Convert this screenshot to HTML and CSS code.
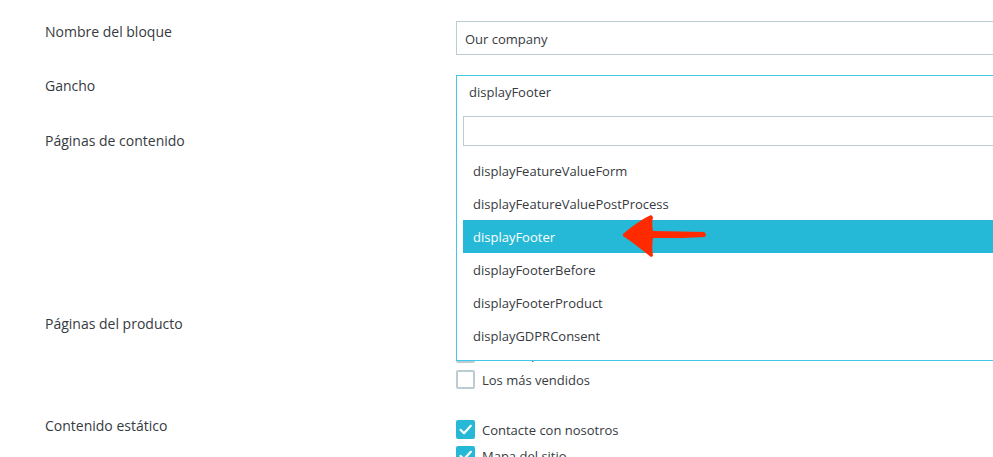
FILE: index.html
```html
<!DOCTYPE html>
<html lang="es">
<head>
<meta charset="utf-8">
<title>Bloque</title>
<link rel="stylesheet" href="styles.css">
</head>
<body>
<div class="form">
  <div class="row">
    <div class="label">Nombre del bloque</div>
    <div class="field">
      <div class="text-input">Our company</div>
    </div>
  </div>

  <div class="row">
    <div class="label">Gancho</div>
    <div class="field select-field">
      <div class="select-box">displayFooter</div>
      <div class="dropdown">
        <div class="search"></div>
        <ul class="options">
          <li class="option">displayFeatureValueForm</li>
          <li class="option">displayFeatureValuePostProcess</li>
          <li class="option active">displayFooter</li>
          <li class="option">displayFooterBefore</li>
          <li class="option">displayFooterProduct</li>
          <li class="option">displayGDPRConsent</li>
        </ul>
      </div>
    </div>
  </div>

  <div class="row">
    <div class="label">Páginas de contenido</div>
    <div class="field checklist checklist-cms">
      <div class="item"><span class="cb"></span><span class="txt">Envío</span></div>
      <div class="item"><span class="cb"></span><span class="txt">Aviso legal</span></div>
      <div class="item"><span class="cb"></span><span class="txt">Términos y condiciones de uso</span></div>
      <div class="item"><span class="cb"></span><span class="txt">Sobre nosotros</span></div>
      <div class="item"><span class="cb"></span><span class="txt">Pago seguro</span></div>
      <div class="item"><span class="cb"></span><span class="txt">Tiendas</span></div>
    </div>
  </div>

  <div class="row">
    <div class="label">Páginas del producto</div>
    <div class="field checklist">
      <div class="item"><span class="cb"></span><span class="txt">Precios rebajados</span></div>
      <div class="item"><span class="cb"></span><span class="txt">Nuevos productos</span></div>
      <div class="item"><span class="cb"></span><span class="txt">Los más vendidos</span></div>
    </div>
  </div>

  <div class="row">
    <div class="label">Contenido estático</div>
    <div class="field checklist">
      <div class="item"><span class="cb checked"><svg viewBox="0 0 19 19" width="19" height="19"><path d="M4.5 9.8 L8 13.2 L14.8 5.8" fill="none" stroke="#fff" stroke-width="2.2" stroke-linecap="round" stroke-linejoin="round"/></svg></span><span class="txt">Contacte con nosotros</span></div>
      <div class="item"><span class="cb checked"><svg viewBox="0 0 19 19" width="19" height="19"><path d="M4.5 9.8 L8 13.2 L14.8 5.8" fill="none" stroke="#fff" stroke-width="2.2" stroke-linecap="round" stroke-linejoin="round"/></svg></span><span class="txt">Mapa del sitio</span></div>
      <div class="item"><span class="cb"></span><span class="txt">Tiendas</span></div>
    </div>
  </div>
</div>

<svg class="arrow" viewBox="0 0 90 48" width="90" height="48">
  <path d="M3 22 C10 16 20 8 31 3 L33 5 C32 10 32 14 33 19 L60 19.5 L84 20 L86 22 L85 25 L62 26 L33 26 C32 32 32 38 33 44 L31 45 C22 38 12 30 3 24 Z" fill="#ff2a00"/>
</svg>
</body>
</html>
```

FILE: styles.css
```css
html, body {
  margin: 0;
  padding: 0;
  overflow: hidden;
  background: #ffffff;
}

body {
  font-family: "Open Sans", "Liberation Sans", sans-serif;
  font-size: 14px;
  color: #363a41;
  position: relative;
  width: 993px;
  height: 457px;
}

.form {
  padding-top: 21px;
}

.row {
  display: grid;
  grid-template-columns: 456px 600px;
  margin-bottom: 20px;
}

.label {
  padding-left: 45px;
  padding-top: 1px;
  line-height: 20px;
}

.field {
  position: relative;
  font-size: 13px;
}

.text-input {
  height: 32px;
  box-sizing: content-box;
  line-height: 32px;
  border: 1px solid #bbcdd2;
  padding-left: 8px;
  position: relative;
}

.text-input::first-line {
  line-height: 34px;
}

.select-box {
  border: 1px solid #40c9e6;
  border-bottom: none;
  padding-left: 12px;
  padding-top: 6px;
  box-sizing: border-box;
  height: 35px;
  line-height: 20px;
}

.dropdown {
  position: absolute;
  left: 0;
  right: 0;
  top: 35px;
  background: #ffffff;
  border: 1px solid #40c9e6;
  border-top: none;
  padding: 6px 6px 8px 6px;
  z-index: 5;
}

.search {
  height: 28px;
  border: 1px solid #bbcdd2;
}

.options {
  list-style: none;
  margin: 8px 0 0 0;
  padding: 0;
}

.option {
  height: 33px;
  box-sizing: border-box;
  padding-top: 1px;
  line-height: 32px;
  padding-left: 10px;
}

.option.active {
  background: #25b9d7;
  color: #ffffff;
}

.checklist {
  padding-bottom: 4px;
}

.checklist-cms {
  padding-bottom: 7px;
}

.item {
  display: flex;
  align-items: flex-start;
  height: 26px;
  box-sizing: border-box;
  padding-top: 5px;
  gap: 7px;
}

.cb {
  width: 19px;
  height: 19px;
  box-sizing: border-box;
  border: 2px solid #bbcdd2;
  border-radius: 2px;
  flex: none;
  position: relative;
}

.cb.checked {
  background: #25b9d7;
  border-color: #25b9d7;
}

.cb svg {
  position: absolute;
  left: -2px;
  top: -2px;
}

.txt {
  line-height: 20px;
}

.arrow {
  position: absolute;
  left: 620px;
  top: 212px;
  z-index: 10;
}
```
